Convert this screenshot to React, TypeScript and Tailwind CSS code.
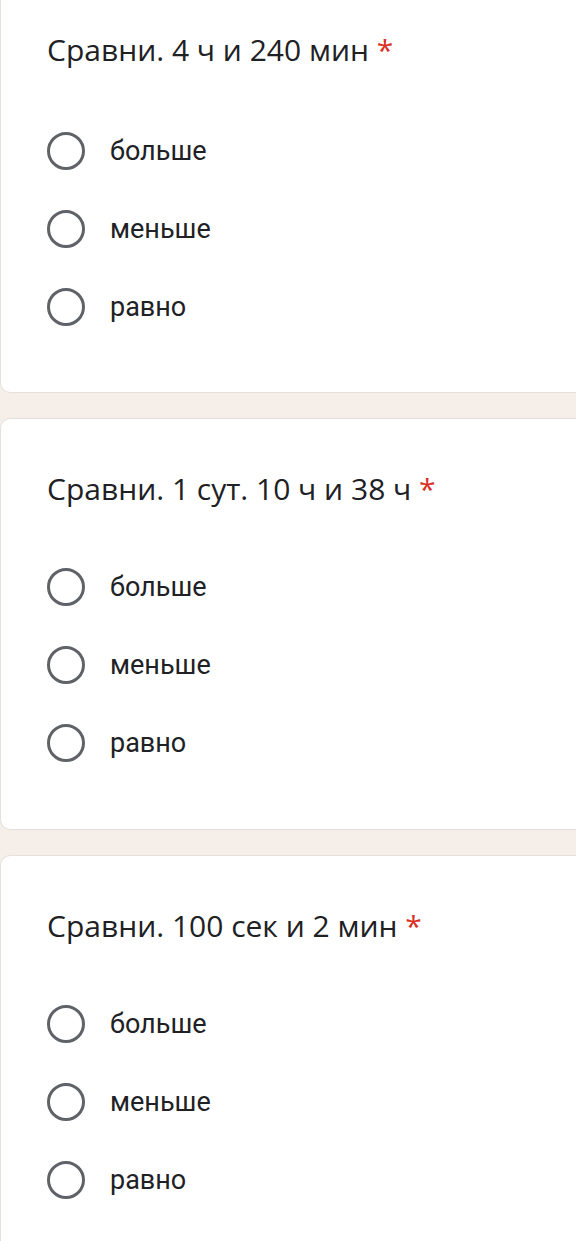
const questions = [
  'Сравни. 4 ч и 240 мин',
  'Сравни. 1 сут. 10 ч и 38 ч',
  'Сравни. 100 сек и 2 мин',
];

const options = ['больше', 'меньше', 'равно'];

function Radio() {
  return <div className="h-[38px] w-[38px] shrink-0 rounded-full border-[3px] border-[#5f6368]" />;
}

function QuestionCard({ title, first }: { title: string; first?: boolean }) {
  return (
    <div
      className={
        'rounded-l-[10px] border border-r-0 border-[#e4e1dd] bg-white pl-[46px] pt-[49px] ' +
        (first ? '-mt-[21px] pb-[66px]' : 'pb-[67px]')
      }
    >
      <div
        className="text-[30px] leading-[42px] text-[#202124]"
        style={{ fontFamily: '"Open Sans", "Noto Sans", sans-serif' }}
      >
        {title} <span className="text-[#d93025]">*</span>
      </div>
      <div className={(first ? 'mt-[61px]' : 'mt-[58px]') + ' flex flex-col gap-[40px]'}>
        {options.map((o) => (
          <div key={o} className="flex items-center gap-[25px]">
            <Radio />
            <span
              className="text-[27px] leading-[38px] text-[#202124]"
              style={{ fontFamily: 'Roboto, "Noto Sans", sans-serif' }}
            >
              {o}
            </span>
          </div>
        ))}
      </div>
    </div>
  );
}

export default function App() {
  return (
    <div className="min-h-[1241px] overflow-hidden bg-[#f6efe9]">
      <div className="flex flex-col gap-[25px]">
        {questions.map((q, i) => (
          <QuestionCard key={q} title={q} first={i === 0} />
        ))}
      </div>
    </div>
  );
}
